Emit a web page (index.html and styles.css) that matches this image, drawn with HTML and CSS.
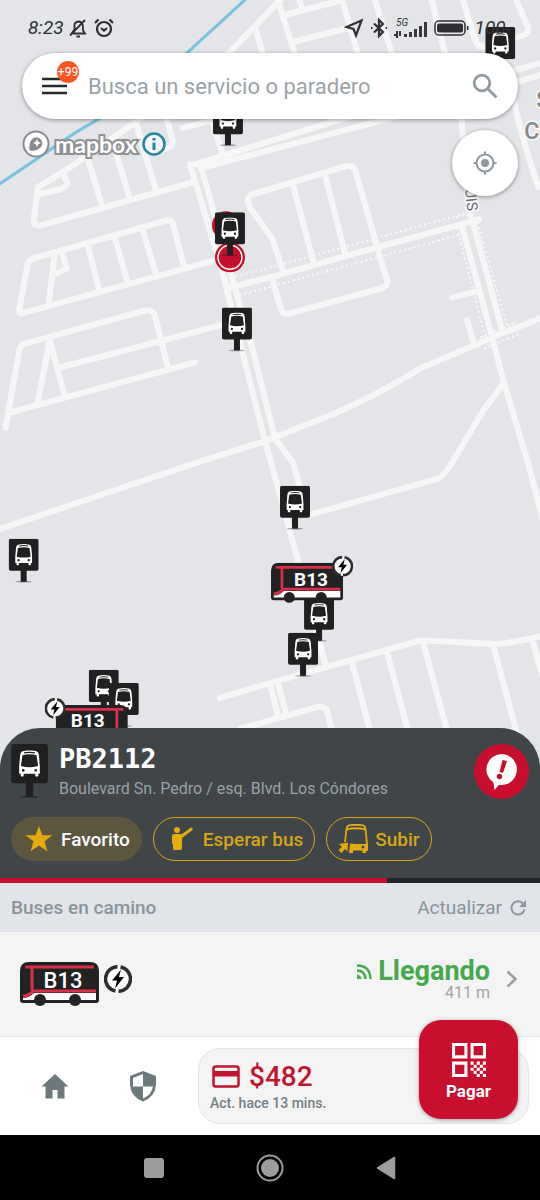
FILE: index.html
```html
<!DOCTYPE html>
<html lang="es">
<head>
<meta charset="utf-8">
<meta name="viewport" content="width=device-width, initial-scale=1">
<title>Paradero PB2112</title>
<link rel="stylesheet" href="styles.css">
</head>
<body>
<svg class="defs" aria-hidden="true">
  <symbol id="front" viewBox="0 0 18 23">
    <path fill="#fff" fill-rule="evenodd" d="M3 1Q9-.6 15 1Q16.6 1.6 17 4L17.8 14V20.2H16.5V22Q15.2 23.4 14 22V20.2H4V22Q2.800 23.400 1.500 22V20.200H.200V14L1 4Q1.400 1.600 3 1ZM4.300 1.900Q9 .900 13.700 1.900V2.800Q9 2 4.300 2.800ZM3 4.400Q9 2.800 15 4.400L16.300 13.500Q9 15.500 1.700 13.500ZM3.700 16A1.200 1.200 0 1 0 3.700 18.400A1.200 1.200 0 1 0 3.700 16ZM14.300 16A1.200 1.200 0 1 0 14.300 18.400A1.200 1.200 0 1 0 14.300 16Z"/>
  </symbol>
  <symbol id="pin" viewBox="0 0 30 44">
    <ellipse cx="15" cy="43" rx="8" ry="1" fill="#000" opacity=".3"/>
    <rect width="30" height="32" rx="2" fill="#202021"/>
    <rect x="12" y="31" width="6" height="12" fill="#202021"/>
    <use href="#front" x="6" y="5" width="18" height="22"/>
  </symbol>
  <symbol id="bus" viewBox="0 0 79 45">
    <path fill="#222223" d="M9 0H70Q79 0 79 9V38Q79 41 76 41H3Q0 41 0 38V9Q0 0 9 0Z"/>
    <path fill="#fff" d="M3 36Q9 36 14 31H76V38H3Z"/>
    <path fill="none" stroke="#d9304a" stroke-width="3" d="M3 34Q9 34 13 29H76M12 28V5M5 5H74"/>
    <circle cx="20" cy="38" r="6" fill="#222223"/><circle cx="55" cy="38" r="6" fill="#222223"/>
  </symbol>
  <symbol id="bolt" viewBox="0 0 28 28">
    <circle cx="14" cy="14" r="13" fill="#fff"/>
    <path fill="none" stroke="#2d2d2f" stroke-width="3.500" d="M16.500 2A12.200 12.200 0 0 1 14.500 26.200M11.500 26A12.200 12.200 0 0 1 13.500 1.800"/>
    <path d="M17 4.500L8 15.500H13L11 23.500L20 12H15Z"/>
  </symbol>
</svg>

<main class="app">
  <section class="map" aria-label="Mapa">
    <svg class="map-canvas" viewBox="0 0 540 767" preserveAspectRatio="xMidYMin slice">
      <path class="river" d="M247-2L188 52Q150 90 97 120Q70 135 47 152L-2 185"/>
      <g class="road">
        <path d="M285-5L230 52L133 124L63 172L38 187L34 220Q34 226 41 225L193 182M63 172L68 184L62 189L38 194"/>
        <path d="M88 158L102 205M116 152L130 198M136 122L156 190M167 120L173 140Q173 147 165 149L151 152M183 128L212 120L222 152"/>
        <path d="M255 27L263 54M277-2L295 54M285 15L342 0L358 54M302 9L299-2M292 42L348 28M374-2L392 54M431-2L445 54M462-2L475 40Q477 48 485 46L521 36Q529 34 528 28L515-2"/>
        <path d="M513 95Q516 120 538 187M461 118L470 215M193 165L338 120L540 63M201 168L398 116L540 75"/>
        <path d="M190 164L222 270L242 350L263 433L278 487L298 560L325 662M201 166L233 280L253 350L275 438L293 462L302 495"/>
        <path d="M283 270L272 238L250 207Q244 195 256 193L346 166Q352 164 355 170L358 180L377 247L387 280Q388 286 381 288L290 313Q283 315 281 309L272 278M293 185L313 260M325 175L345 253"/>
        <path d="M227 288L270 277L377 247L479 219M462 227L492 337L503 380L527 460L542 518M472 220L502 330M452 297L477 291M467 320L473 341"/>
        <path d="M542 317L492 337L420 368Q380 393 337 412L267 440L200 461L-2 529M503 383L483 410L453 460Q445 474 438 478L310 514"/>
        <path d="M20 306L28 264Q29 260 34 258L167 220Q171 219 173 223L184 266M215 260L22 313Q18 313 20 306M55 254L49 304M62 251L67 268L57 273M88 245L99 288M115 237L127 280M143 230L156 273"/>
        <path d="M6 427L20 348Q21 345 26 343L146 310Q153 309 155 315L168 367M10 412L195 362M50 340L38 402M50 340L65 395M60 367L220 325"/>
        <path d="M220 697L250 688L415 641Q422 639 430 640L490 643Q505 644 542 635M270 683L278 715M278 682L286 712M240 728L250 725L318 706Q325 705 327 710L332 730M352 662L370 730M387 652L408 730M423 642L447 730M493 645L516 730M532 640L542 675"/>
      </g>
      <path class="dots" d="M226 278L268 268L465 213M230 297L268 287L465 233M457 228L487 345M477 222L508 330M456 217L466 214M484 348L520 333M480 337L516 322"/>
      <g class="place">
        <text x="536" y="108" font-size="23">San</text>
        <text x="524" y="139" font-size="23">Co</text>
        <text class="street" transform="translate(464 181) rotate(84)">LUIS</text>
      </g>
      <use href="#pin" x="213" y="102" width="30" height="44"/>
      <use href="#pin" x="485" y="27" width="30" height="44"/>
      <circle cx="226" cy="225" r="14" fill="#c60f2b"/>
      <circle cx="230" cy="257" r="15" fill="#c60f2b"/>
      <circle cx="230" cy="257" r="12" fill="none" stroke="#fff" stroke-width="1.500"/>
      <use href="#pin" x="215" y="212" width="30" height="44"/>
      <use href="#pin" x="222" y="307" width="30" height="44"/>
      <use href="#pin" x="280" y="485" width="30" height="44"/>
      <use href="#pin" x="9" y="538" width="30" height="44"/>
      <use href="#pin" x="304" y="597" width="30" height="44"/>
      <use href="#pin" x="288" y="632" width="30" height="44"/>
      <use href="#pin" x="89" y="669" width="30" height="44"/>
      <use href="#pin" x="109" y="682" width="30" height="44"/>
      <use href="#bus" x="271" y="562" width="72" height="41"/>
      <text class="line-code" x="311" y="585">B13</text>
      <use href="#bolt" x="332" y="555" width="21" height="21"/>
      <use href="#bus" width="72" height="41" transform="translate(128 704) scale(-1 1)"/>
      <text class="line-code" x="88" y="726">B13</text>
      <use href="#bolt" x="45" y="697" width="21" height="21"/>
    </svg>

    <div class="status">
      <span class="clock">8:23</span>
      <svg width="20" height="20" viewBox="0 0 20 20" class="line"><path d="M5 15.500H17L15 12.500V8.500Q14.500 4 11 3.500Q8 3.500 6.500 6V11.500L3.500 15.500M2 17.500L17 2M8.500 18.500H12"/></svg>
      <svg width="20" height="20" viewBox="0 0 20 20" class="line bold"><circle cx="10" cy="11" r="7"/><path d="M7 10L10 12.500L13 10M1 5L4.500 1.500M15.500 1.500L19 5"/></svg>
      <span class="spacer"></span>
      <svg width="20" height="20" viewBox="0 0 20 20" class="line bold"><path d="M2.500 9L17.500 2.500L12 17.500L9.500 11Z"/></svg>
      <svg width="18" height="20" viewBox="0 0 18 20" class="line bold"><path d="M4 5.500L13 14L9 18V2L13 6L4 14.500M1 10H2.500M15.500 10H17"/></svg>
      <svg width="34" height="22" viewBox="0 0 34 22"><text x="2" y="9" class="net">5G</text><path fill="#37393c" d="M0 17H2V14H4V21H2V19H0ZM5 14H7V19H5ZM10 17H13V20H10ZM15 15H18V20H15ZM20 12H23V20H20ZM25 9H28V20H25ZM30 5H33V20H30Z"/></svg>
      <svg class="battery" width="35" height="16" viewBox="0 0 35 16"><rect x="1" y="1" width="30" height="14" rx="4" fill="none" stroke="#2e3033" stroke-width="1.500"/><rect x="3" y="3.500" width="26" height="9" rx="2" fill="#2e3033"/><path fill="#2e3033" d="M33 6H34.500V10H33Z"/></svg>
      <span class="level">100<small>%</small></span>
    </div>

    <form class="search">
      <button type="button" class="menu" aria-label="Menú">
        <svg width="26" height="18" viewBox="0 0 26 18"><path stroke="#26282a" stroke-width="2.500" d="M0 2H25M0 9H25M0 16H25"/></svg>
        <span class="badge">+99</span>
      </button>
      <input type="text" aria-label="Buscar" placeholder="Busca un servicio o paradero">
      <button type="submit" aria-label="Buscar">
        <svg width="26" height="26" viewBox="0 0 26 26" fill="none" stroke="#919ca2" stroke-width="2.800"><circle cx="10" cy="10" r="7.800"/><path d="M15.500 15.500L24.500 24.500"/></svg>
      </button>
    </form>

    <div class="map-tools">
      <div class="credit">
        <svg width="28" height="28" viewBox="0 0 28 28"><circle cx="14" cy="14" r="12.500" fill="#fff" stroke="#8a8b8d" stroke-width="2"/><path fill="#8a8b8d" d="M7.500 20.500Q6.500 12 11 8.500Q15 6 18.500 9Q22 13 19 17Q15 21.500 7.500 20.500Z"/><path fill="#fff" d="M15 9L16.300 11.700L19 13L16.300 14.300L15 17L13.700 14.300L11 13L13.700 11.700Z"/></svg>
        <span class="wordmark">mapbox</span>
        <button type="button" aria-label="Información del mapa"><svg width="24" height="24" viewBox="0 0 24 24"><circle cx="12" cy="12" r="10.500" fill="#f4f6f7" stroke="#2285a3" stroke-width="2.500"/><path fill="#2285a3" d="M10.500 6H13.500V8.500H10.500ZM10.500 10.500H13.500V18H10.500Z"/></svg></button>
      </div>
      <button type="button" class="locate" aria-label="Mi ubicación">
        <svg width="24" height="24" viewBox="0 0 24 24" fill="none" stroke="#8e999f" stroke-width="2"><circle cx="12" cy="12" r="8.500"/><circle cx="12" cy="12" r="4" fill="#8e999f" stroke="none"/><path d="M12 .5V4M12 20V23.500M.5 12H4M20 12H23.500"/></svg>
      </button>
    </div>
  </section>

  <section class="stop">
    <div class="stop-head">
      <svg width="37" height="54" viewBox="0 0 30 44"><use href="#pin" width="30" height="44"/></svg>
      <div class="stop-name">
        <h1>PB2112</h1>
        <p>Boulevard Sn. Pedro / esq. Blvd. Los Cóndores</p>
      </div>
      <button type="button" class="report" aria-label="Reportar">
        <svg width="34" height="38" viewBox="0 0 34 38"><path fill="#fff" d="M17 1A15.500 15.500 0 1 1 14 31.800L9.500 37L8.500 29.500A15.500 15.500 0 0 1 17 1Z"/><path fill="#c8102e" d="M17.500 7L22 8L18 20L14.500 19Z"/><circle cx="14.500" cy="23.500" r="2.700" fill="#c8102e"/></svg>
      </button>
    </div>
    <div class="chips">
      <button type="button" class="chip active"><svg width="28" height="28" viewBox="0 0 28 28"><path fill="#e5aa0c" d="M14 1L17.300 10.300H27.500L19.500 16.300L22.500 26.500L14 20.500L5.500 26.500L8.500 16.300L.5 10.300H10.700Z"/></svg>Favorito</button>
      <button type="button" class="chip wait"><svg width="24" height="26" viewBox="0 0 24 26"><circle cx="7" cy="4" r="3" fill="#e5aa0c"/><path fill="#e5aa0c" d="M4 8H12L21 1.500Q23.500 1.500 22.500 4L12 12V22Q12 24 10.500 24H4Q3 24 3 22V19Q2 18 2 16V10Q2 8 4 8Z"/></svg>Esperar bus</button>
      <button type="button" class="chip"><svg width="30" height="30" viewBox="0 0 30 30"><path fill="none" stroke="#e5aa0c" stroke-width="1.800" d="M7 18L8.500 5Q9 1.500 12 1.200Q18 .3 24 1.200Q27 1.500 27.500 5L29 20V27M8.500 5.500Q18 3 27.500 5.500"/><path fill="#e5aa0c" fill-rule="evenodd" d="M13 19.500Q22 20.500 29.500 19.500V26.500H28V29H24.500V26.500H15V29H11L12 20ZM25 21.500A1.500 1.500 0 1 0 25 24.500A1.500 1.500 0 1 0 25 21.500ZM1 20L10 18.500L9.500 27.500L7 25L3.500 29L.5 26L4 22.800Z"/></svg>Subir</button>
    </div>
    <div class="progress"><span class="progress-fill" style="width:71.67%"></span></div>
  </section>

  <section class="arrivals">
    <header class="arrivals-head">
      <h2>Buses en camino</h2>
      <button type="button">Actualizar
        <svg width="16" height="16" viewBox="0 0 16 16"><path fill="none" stroke="#8c969c" stroke-width="2" d="M12.800 3.300A6.600 6.600 0 1 0 14.500 9.500"/><path fill="#8c969c" d="M16 0V7H9Z"/></svg>
      </button>
    </header>
    <a class="arrival" href="#b13">
      <svg class="vehicle" width="79" height="45" viewBox="0 0 79 45"><use href="#bus" width="79" height="45"/><text class="line-code medium" x="43" y="26">B13</text></svg>
      <svg class="electric" width="28" height="28" viewBox="0 0 28 28"><use href="#bolt" width="28" height="28"/></svg>
      <span class="eta">
        <strong><svg width="15" height="15" viewBox="0 0 15 15" fill="none" stroke="#44aa4c" stroke-width="2.400"><path d="M0 1.500Q13 1.500 13.500 15M0 6.500Q8 6.500 8.500 15"/><path fill="#44aa4c" stroke="none" d="M0 10.500Q4 11 4.500 15H0Z"/></svg>Llegando</strong>
        <small>411 m</small>
      </span>
      <svg width="12" height="18" viewBox="0 0 12 18"><path fill="none" stroke="#989ea2" stroke-width="2.500" d="M1.500 1.500L9.500 9L1.500 16.500"/></svg>
    </a>
  </section>

  <nav class="tabs">
    <a href="#inicio" aria-label="Inicio"><svg width="28" height="25" viewBox="0 0 28 25"><path fill="#6e797e" d="M14 0L27.500 12.500H23.500V24.500H16.500V16H11.500V24.500H4.500V12.500H.5Z"/></svg></a>
    <a href="#seguridad" aria-label="Seguridad"><svg width="26" height="31" viewBox="0 0 26 31"><path fill="#6e797e" fill-rule="evenodd" d="M13 0L26 5V14Q25 26 13 30.500Q1 26 0 14V5ZM13 3L3 7V15.500H13ZM13 15.500V27.500Q21.500 24 23 15.500Z"/></svg></a>
    <div class="balance">
      <div class="amount"><svg width="28" height="23" viewBox="0 0 28 23"><rect x="1.500" y="1.500" width="25" height="20" rx="2" fill="none" stroke="#c0152f" stroke-width="2.500"/><path fill="#c0152f" d="M1 6H27V11.500H1Z"/></svg>$482</div>
      <p>Act. hace 13 mins.</p>
      <button type="button" class="pay"><svg width="34" height="34" viewBox="0 0 33 33"><g fill="none" stroke="#fff" stroke-width="3"><path d="M1.500 1.500H13.500V13.500H1.500ZM19.500 1.500H31.500V13.500H19.500ZM1.500 19.500H13.500V31.500H1.500Z"/></g><path fill="#fff" d="M18 18h3v3h-3zM24 18h3v3h-3zM21 21h3v3h-3zM27 21h3v3h-3zM18 24h3v3h-3zM24 24h3v3h-3zM30 24h3v3h-3zM21 27h3v3h-3zM27 27h3v3h-3zM24 30h3v3h-3zM30 30h3v3h-3zM30 18h3v3h-3z"/></svg>Pagar</button>
    </div>
  </nav>

  <div class="system">
    <button type="button" aria-label="Recientes"><svg width="20" height="20"><rect width="20" height="20" rx="3" fill="#9c9c9c"/></svg></button>
    <button type="button" aria-label="Inicio del sistema"><svg width="28" height="28" viewBox="0 0 28 28"><circle cx="14" cy="14" r="12.500" fill="none" stroke="#9c9c9c" stroke-width="2"/><circle cx="14" cy="14" r="9" fill="#9c9c9c"/></svg></button>
    <button type="button" aria-label="Atrás"><svg width="20" height="24" viewBox="0 0 20 24"><path fill="#9c9c9c" stroke="#9c9c9c" stroke-width="1.500" stroke-linejoin="round" d="M18.500 1.500V22.500L1.500 12Z"/></svg></button>
  </div>
</main>
</body>
</html>
```

FILE: styles.css
```css
* { box-sizing: border-box; }

body {
  margin: 0;
  font-family: Roboto, "Liberation Sans", sans-serif;
  background: #000;
}

h1, h2, p { margin: 0; }

button {
  border: 0;
  padding: 0;
  background: none;
  font: inherit;
  color: inherit;
  cursor: pointer;
}

a { color: inherit; text-decoration: none; }
svg { display: block; flex: none; }

.defs { position: absolute; width: 0; height: 0; }

.app {
  display: flex;
  flex-direction: column;
  min-height: 100vh;
}

/* Map */
.map {
  position: relative;
  flex: 1;
  min-height: 320px;
  background: #e4e5e9;
}
.map-canvas {
  position: absolute;
  inset: 0;
  width: 100%;
  height: 100%;
}
.river { fill: none; stroke: #78c3e1; stroke-width: 3; }
.road {
  fill: none;
  stroke: #f6f8f8;
  stroke-width: 6;
  stroke-linecap: round;
  stroke-linejoin: round;
}
.dots { fill: none; stroke: #f8f9fa; stroke-width: 2; stroke-dasharray: 2 3; }
.place {
  fill: #858789;
  stroke: #f8f9fa;
  stroke-width: 3;
  paint-order: stroke;
  font-weight: 500;
}
.street { font-size: 15px; font-weight: 400; fill: #66686a; }
.line-code {
  fill: #fff;
  font-size: 19px;
  font-weight: 700;
  text-anchor: middle;
}
.medium { font-size: 22px; font-weight: 500; }

.status {
  position: relative;
  display: flex;
  align-items: center;
  gap: 6px;
  height: 53px;
  padding: 2px 28px 0;
  color: #303235;
  font-size: 19px;
  font-style: italic;
}
.clock { margin-right: -2px; }
.spacer { flex: 1; }
.line { fill: none; stroke: #2e3033; stroke-width: 1.8; }
.bold { stroke-width: 2.2; }
.net { font-size: 10px; fill: #37393c; }
.level small { font-size: 9px; }

.search {
  position: relative;
  display: flex;
  align-items: center;
  height: 66px;
  margin: 0 22px;
  padding: 0 20px;
  border-radius: 33px;
  background: #fff;
  box-shadow: 0 1px 4px rgba(0, 0, 0, .4);
}
.search input {
  flex: 1;
  min-width: 0;
  margin: 0 20px;
  padding: 0;
  border: 0;
  outline: 0;
  background: none;
  font: 22px Roboto, sans-serif;
  color: #26282a;
}
.search input::placeholder { color: #99a3a8; opacity: 1; }
.menu { position: relative; }
.badge {
  position: absolute;
  left: 15px;
  top: -16px;
  width: 22px;
  height: 22px;
  border-radius: 50%;
  background: #fc5722;
  color: #fff;
  font-size: 12px;
  line-height: 22px;
  text-align: center;
}

.map-tools {
  position: relative;
  display: flex;
  justify-content: space-between;
  align-items: flex-start;
  padding: 11px 22px;
}
.credit { display: flex; align-items: center; gap: 5px; }
.wordmark {
  font: 700 23px/26px Lato, sans-serif;
  color: #fff;
  -webkit-text-stroke: 4px #8f9092;
  paint-order: stroke;
}
.locate {
  display: grid;
  place-items: center;
  width: 66px;
  height: 66px;
  border-radius: 50%;
  background: #fff;
  box-shadow: 0 1px 4px rgba(0, 0, 0, .4);
}

/* Selected stop */
.stop {
  position: relative;
  margin-top: -40px;
  padding-top: 16px;
  border-radius: 40px 40px 0 0;
  background: #404548;
}
.stop-head {
  display: flex;
  align-items: flex-start;
  padding: 0 11px;
}
.stop-name { flex: 1; min-width: 0; padding-left: 11px; }
.stop-name h1 {
  font: 700 27px/30px "DejaVu Sans Mono", monospace;
  color: #fff;
}
.stop-name p { font-size: 16px; line-height: 30px; color: #9aa3a8; }
.report {
  display: grid;
  place-items: center;
  width: 55px;
  height: 55px;
  border-radius: 50%;
  background: #c8102e;
}
.chips {
  display: flex;
  flex-wrap: wrap;
  gap: 11px;
  padding: 13px 11px 17px;
}
.chip {
  display: flex;
  align-items: center;
  gap: 7px;
  height: 44px;
  padding: 0 11px;
  border: 1px solid #d9a514;
  border-radius: 22px;
  color: #d9a514;
  font-size: 19px;
  font-weight: 500;
}
.active {
  gap: 8px;
  padding-left: 13px;
  border-color: #5c563f;
  background: #5c563f;
  color: #fff;
}
.wait { gap: 9px; padding-left: 16px; }
.progress { height: 5px; background: #212528; }
.progress-fill { display: block; height: 100%; background: #c8102e; }

/* Arrivals */
.arrivals { background: #f4f4f4; border-bottom: 1px solid #e2e5e8; }
.arrivals-head {
  display: flex;
  justify-content: space-between;
  align-items: center;
  height: 49px;
  padding: 0 14px 0 11px;
  background: #e1e4e9;
  color: #89949a;
}
.arrivals-head h2 { font-size: 19px; font-weight: 500; }
.arrivals-head button {
  display: flex;
  align-items: center;
  gap: 8px;
  font-size: 19px;
}
.arrival {
  display: flex;
  align-items: center;
  height: 104px;
  padding: 0 22px 10px 20px;
}
.vehicle { margin-top: 10px; }
.electric { margin-left: 5px; }
.eta {
  display: flex;
  flex: 1;
  flex-direction: column;
  align-items: flex-end;
  margin-right: 16px;
}
.eta strong {
  display: flex;
  align-items: center;
  gap: 6px;
  color: #44aa4c;
  font-size: 27px;
  line-height: 28px;
}
.eta small { font-size: 16px; line-height: 16px; color: #9ca4a9; }

/* Bottom tabs */
.tabs {
  display: grid;
  grid-template-columns: 88px 88px 1fr;
  align-items: center;
  justify-items: center;
  padding: 11px;
  background: #fff;
}
.balance {
  position: relative;
  justify-self: stretch;
  margin-left: 11px;
  padding: 10px 11px;
  border: 1px solid #e3e5e8;
  border-radius: 22px;
  background: #f4f4f5;
}
.amount {
  display: flex;
  align-items: center;
  gap: 9px;
  padding-left: 2px;
  color: #c0152f;
  font-size: 28px;
  font-weight: 500;
  line-height: 35px;
}
.balance p {
  font-size: 14px;
  font-weight: 500;
  line-height: 19px;
  color: #737e84;
}
.pay {
  position: absolute;
  right: 10px;
  bottom: 4px;
  display: flex;
  flex-direction: column;
  align-items: center;
  justify-content: center;
  gap: 4px;
  width: 99px;
  height: 99px;
  padding-top: 4px;
  border-radius: 22px;
  background: #c8102e;
  color: #fff;
  font-size: 17px;
  font-weight: 700;
  box-shadow: 0 1px 4px rgba(0, 0, 0, .35);
}

.system {
  display: flex;
  justify-content: center;
  height: 65px;
  background: #000;
}
.system button {
  display: grid;
  place-items: center;
  width: 116px;
}
```
